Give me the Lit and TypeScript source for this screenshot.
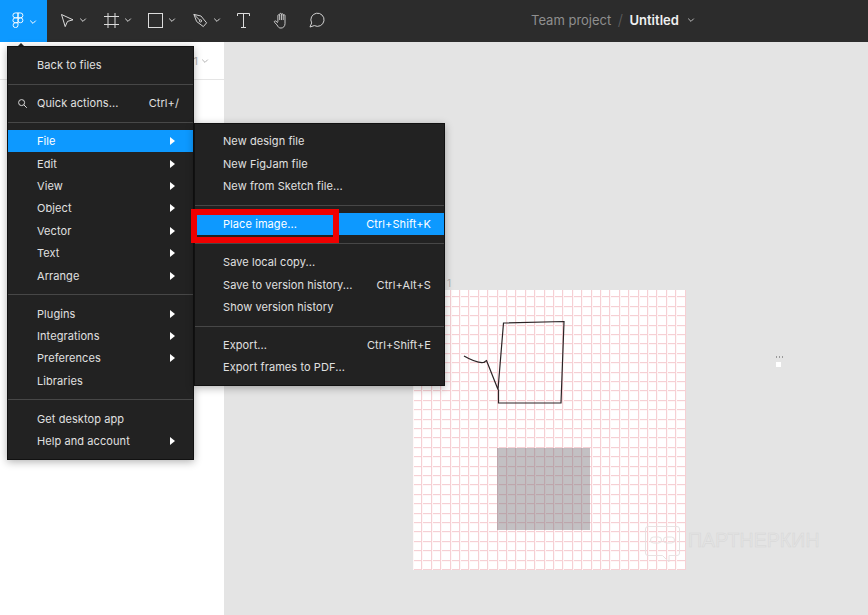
import { LitElement, html, css, svg } from "lit";
import { customElement } from "lit/decorators.js";

type Item = { label: string; shortcut?: string; arrow?: boolean; active?: boolean; search?: boolean };
type Sep = { sep: true };
type Entry = Item | Sep;

const MAIN: Entry[] = [
  { label: "Back to files" },
  { sep: true },
  { label: "Quick actions...", shortcut: "Ctrl+/", search: true },
  { sep: true },
  { label: "File", arrow: true, active: true },
  { label: "Edit", arrow: true },
  { label: "View", arrow: true },
  { label: "Object", arrow: true },
  { label: "Vector", arrow: true },
  { label: "Text", arrow: true },
  { label: "Arrange", arrow: true },
  { sep: true },
  { label: "Plugins", arrow: true },
  { label: "Integrations", arrow: true },
  { label: "Preferences", arrow: true },
  { label: "Libraries" },
  { sep: true },
  { label: "Get desktop app" },
  { label: "Help and account", arrow: true },
];

const SUB: Entry[] = [
  { label: "New design file" },
  { label: "New FigJam file" },
  { label: "New from Sketch file..." },
  { sep: true },
  { label: "Place image...", shortcut: "Ctrl+Shift+K", active: true },
  { sep: true },
  { label: "Save local copy..." },
  { label: "Save to version history...", shortcut: "Ctrl+Alt+S" },
  { label: "Show version history" },
  { sep: true },
  { label: "Export...", shortcut: "Ctrl+Shift+E" },
  { label: "Export frames to PDF..." },
];

const chev = svg`<svg class="chev" width="8" height="8" viewBox="0 0 8 8"><path d="M1.2 2.6 4 5.4l2.8-2.8" fill="none" stroke="currentColor" stroke-width="1"/></svg>`;

@customElement("app-root")
export class AppRoot extends LitElement {
  static styles = css`
    :host {
      display: block;
      width: 868px;
      height: 615px;
      overflow: hidden;
      position: relative;
      font-family: Inter, "Liberation Sans", sans-serif;
      font-size: 11px;
      background: #e4e4e4;
    }
    .bar {
      height: 42px;
      background: #2c2c2c;
      display: flex;
      align-items: center;
      color: #e6e6e6;
      position: relative;
    }
    .logo {
      width: 47px;
      height: 42px;
      box-sizing: border-box;
      padding: 0 0 3px 12px;
      background: #0d99ff;
      display: flex;
      align-items: center;
      gap: 5px;
      color: #fff;
      flex: none;
    }
    .logo .chev { margin-top: 5px; }
    .tools {
      display: flex;
      align-items: center;
      height: 42px;
      box-sizing: border-box;
      padding-bottom: 2px;
    }
    .tool {
      display: flex;
      align-items: center;
      gap: 5px;
      color: #dcdcdc;
    }
    .t-move { margin-left: 13px; }
    .t-frame { margin-left: 17px; }
    .t-rect { margin-left: 16px; }
    .t-pen { margin-left: 17px; }
    .t-text { margin-left: 16px; }
    .t-hand { margin-left: 23px; }
    .t-comment { margin-left: 20px; }
    .title {
      position: absolute;
      left: 531px;
      top: 0;
      height: 42px;
      box-sizing: border-box;
      padding-bottom: 3px;
      display: flex;
      align-items: center;
      font-size: 13px;
      white-space: nowrap;
    }
    .team { color: #8f8f8f; font-weight: 400; }
    .slash { color: #5e5e5e; margin: 0 6.5px; font-weight: 300; font-size: 15px; }
    .name { color: #f0f0f0; font-weight: 600; }
    .title .chev { margin-left: 8px; color: #bdbdbd; }
    .body { display: flex; height: 573px; }
    .panel {
      width: 224px;
      flex: none;
      background: #fff;
    }
    .panel-head {
      height: 38px;
      box-sizing: border-box;
      border-bottom: 1px solid #e5e5e5;
      display: flex;
      align-items: center;
      justify-content: flex-end;
      gap: 3px;
      padding-right: 15px;
      color: #b3b3b3;
    }
    .canvas { flex: 1; position: relative; }
    .frame-label {
      position: absolute;
      left: 223px;
      top: 235px;
      font-size: 10px;
      color: #b0b0b0;
    }
    .frame {
      position: absolute;
      left: 189px;
      top: 248px;
      width: 273px;
      height: 280px;
      background-color: #fff;
      background-image:
        repeating-linear-gradient(90deg, #f6d0d4 -1px, #f6d0d4 0, #fef7f7 0, #fef7f7 1px, transparent 1px, transparent 8.4px),
        repeating-linear-gradient(180deg, #f6d0d4 -3px, #f6d0d4 -2px, #fef7f7 -2px, #fef7f7 -1px, transparent -1px, transparent 6.4px);
    }
    .drawing { position: absolute; left: 0; top: 0; }
    .gray {
      position: absolute;
      left: 83.5px;
      top: 158px;
      width: 93.5px;
      height: 82px;
      background: rgba(125, 118, 125, 0.46);
    }
    .dots {
      position: absolute;
      left: 552px;
      top: 314px;
      width: 8px;
      height: 2px;
      background-image: repeating-linear-gradient(90deg, #9a9a9a 0 1px, transparent 1px 3px);
    }
    .white-sq {
      position: absolute;
      left: 552px;
      top: 320px;
      width: 5px;
      height: 4.5px;
      background: #fff;
    }
    .mark {
      position: absolute;
      left: 421px;
      top: 484px;
      display: flex;
      align-items: flex-start;
      gap: 8px;
    }
    .mark span {
      font-family: "Liberation Sans", sans-serif;
      font-size: 19.5px;
      line-height: 22px;
      margin-top: 3px;
      letter-spacing: 0.1px;
      color: #e4e4e4;
      -webkit-text-stroke: 0.5px #d6d6d6;
      white-space: nowrap;
    }
    .menu {
      position: absolute;
      background: #222222;
      color: #e6e6e6;
      box-sizing: border-box;
      border: 1px solid #111;
      box-shadow: 0 2px 8px rgba(0, 0, 0, 0.3);
      display: flex;
      flex-direction: column;
    }
    .main { left: 7px; top: 46px; width: 187px; padding: 7.1px 0 6.5px; }
    .sub { left: 194px; top: 123px; width: 251px; padding: 6.3px 0; }
    .notch {
      position: absolute;
      left: 17px;
      top: 42.5px;
      width: 0;
      height: 0;
      border-left: 4.5px solid transparent;
      border-right: 4.5px solid transparent;
      border-bottom: 4px solid #222;
    }
    .row {
      height: 22.4px;
      display: flex;
      align-items: center;
      flex: none;
      position: relative;
      font-size: 11px;
      letter-spacing: 0.08px;
      white-space: nowrap;
      color: #e0e0e0;
    }
    .row.active { background: #0d99ff; color: #fff; }
    .main .row { padding: 0 0 0 29px; }
    .sub .row { padding: 0 13px 0 28px; }
    .label { flex: 1; }
    .main .shortcut { margin-right: 14px; }
    .row.active .shortcut { color: #fff; }
    .arrow {
      width: 0;
      height: 0;
      border-left: 5.5px solid #fff;
      border-top: 4px solid transparent;
      border-bottom: 4px solid transparent;
      margin-right: 18px;
    }
    .search { position: absolute; left: 9px; top: 6px; color: #d8d8d8; }
    .sep { height: 1px; background: #474747; margin: 7.3px 0; flex: none; }
    .hl {
      position: absolute;
      left: 191px;
      top: 208.5px;
      width: 148px;
      height: 34.5px;
      box-sizing: border-box;
      border: 6px solid #f00000;
    }
  `;

  private rows(list: Entry[]) {
    return list.map((e) => {
      if ("sep" in e) return html`<div class="sep"></div>`;
      return html`<div class="row ${e.active ? "active" : ""}">
        ${e.search
          ? html`<svg class="search" width="11" height="11" viewBox="0 0 11 11"><circle cx="4.6" cy="4.6" r="3" fill="none" stroke="currentColor"/><path d="m6.8 6.8 3 3" stroke="currentColor"/></svg>`
          : ""}
        <span class="label">${e.label}</span>
        ${e.shortcut ? html`<span class="shortcut">${e.shortcut}</span>` : ""}
        ${e.arrow ? html`<span class="arrow"></span>` : ""}
      </div>`;
    });
  }

  render() {
    return html`
      <div class="bar">
        <div class="logo">
          <svg width="12" height="16" viewBox="0 0 12 17" fill="none" stroke="currentColor" stroke-width="1">
            <path d="M6 1H3.2a2.6 2.6 0 0 0 0 5.2H6V1Z"/>
            <path d="M6 1h2.6a2.6 2.6 0 0 1 0 5.2H6V1Z"/>
            <path d="M6 6.2H3.2a2.6 2.6 0 0 0 0 5.2H6V6.2Z"/>
            <circle cx="8.6" cy="8.8" r="2.6"/>
            <path d="M3.2 11.4H6V14a2.6 2.6 0 1 1-2.8-2.6Z"/>
          </svg>
          ${chev}
        </div>
        <div class="tools">
          <div class="tool t-move">
            <svg width="14" height="15" viewBox="0 0 14 15" fill="none" stroke="currentColor"><path d="M1.5 1.5 13 6.8 7.5 8.4 5.2 13.6Z"/></svg>
            ${chev}
          </div>
          <div class="tool t-frame">
            <svg width="15" height="15" viewBox="0 0 15 15" fill="none" stroke="currentColor"><path d="M4 0v15M11 0v15M0 3.5h15M0 11.5h15"/></svg>
            ${chev}
          </div>
          <div class="tool t-rect">
            <svg width="15" height="15" viewBox="0 0 15 15" fill="none" stroke="currentColor"><rect x="0.5" y="0.5" width="14" height="14"/></svg>
            ${chev}
          </div>
          <div class="tool t-pen">
            <svg width="15" height="15" viewBox="0 0 16 16" fill="none" stroke="currentColor"><path d="M1 1.5 8.5 3.2 14.5 10.5 11 14.5 3.8 9Z"/><path d="M1 1.5 7 7.5"/><circle cx="8" cy="8.4" r="1.2"/></svg>
            ${chev}
          </div>
          <div class="tool t-text">
            <svg width="13" height="15" viewBox="0 0 13 15" fill="none" stroke="currentColor"><path d="M.5 3V.5h12V3M6.5 .5v14M4 14.5h5"/></svg>
          </div>
          <div class="tool t-hand">
            <svg width="16" height="19" viewBox="0 0 18 19" fill="none" stroke="currentColor"><path d="M5.5 11V4a1 1 0 0 1 2 0V2.5a1 1 0 0 1 2 0V3a1 1 0 0 1 2 0v1a1 1 0 0 1 2 0v9c0 3-2 5-4.5 5S6 17 4.5 14.5L1.8 11.6c-.9-1 .4-2.3 1.5-1.4L5.5 12"/><path d="M7.5 4v5M9.5 3v6M11.5 4v5"/></svg>
          </div>
          <div class="tool t-comment">
            <svg width="17" height="16" viewBox="0 0 18 17" fill="none" stroke="currentColor"><path d="M1 16 2.8 11.6A7 7 0 1 1 5.6 14.4Z"/></svg>
          </div>
        </div>
        <div class="title">
          <span class="team">Team project</span><span class="slash">/</span><span class="name">Untitled</span>${chev}
        </div>
      </div>
      <div class="body">
        <div class="panel">
          <div class="panel-head"><span>1</span>${chev}</div>
        </div>
        <div class="canvas">
          <div class="frame-label">1</div>
          <div class="frame">
            <svg class="drawing" width="273" height="280" viewBox="0 0 273 280" fill="none" stroke="#2b2325" stroke-width="1.2">
              <path d="M51 66C58 70 64 73 70 72.5 72 72.5 72 71 73.5 70.5L85 99.5M85 99.5 90.5 33 151 31.5 148 113H85.5V99.5"/>
            </svg>
            <div class="gray"></div>
          </div>
          <div class="dots"></div>
          <div class="white-sq"></div>
          <div class="mark">
            <svg width="35" height="37" viewBox="0 0 35 37" fill="none" stroke="#e8e2e2" stroke-width="1"><path d="M3 .5h29a2.5 2.5 0 0 1 2.5 2.5v24a2.5 2.5 0 0 1-2.5 2.5h-8V36l-6.5-6.5H3A2.5 2.5 0 0 1 .5 27V3A2.5 2.5 0 0 1 3 .5Z"/><rect x="5.5" y="11" width="11" height="6" rx="3"/><rect x="18.5" y="11" width="11" height="6" rx="3"/></svg>
            <span>ПАРТНЕРКИН</span>
          </div>
        </div>
      </div>
      <div class="notch"></div>
      <div class="menu main">${this.rows(MAIN)}</div>
      <div class="menu sub">${this.rows(SUB)}</div>
      <div class="hl"></div>
    `;
  }
}
